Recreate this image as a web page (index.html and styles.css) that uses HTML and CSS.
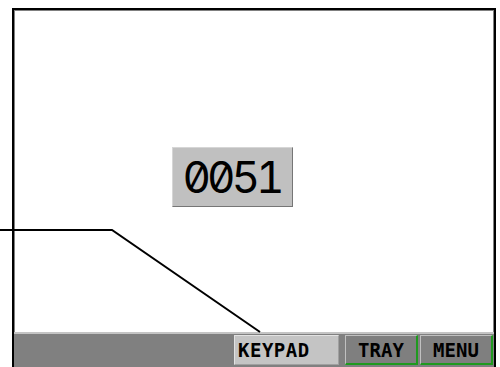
FILE: index.html
```html
<!DOCTYPE html>
<html lang="en">
<head>
  <meta charset="UTF-8">
  <meta name="viewport" content="width=device-width, initial-scale=1.0">
  <title>Counter Screen</title>
  <link rel="stylesheet" href="styles.css">
</head>
<body>

  <div class="screen">
    <div class="canvas">
      <div class="counter">0051</div>
    </div>

    <div class="status-bar">
      <button class="btn btn-keypad">KEYPAD</button>
      <button class="btn btn-tray">TRAY</button>
      <button class="btn btn-menu">MENU</button>
    </div>
  </div>

  <svg class="callout" width="500" height="367" viewBox="0 0 500 367">
    <polyline points="0,230 112,230 260,332" fill="none" stroke="#000" stroke-width="2" />
  </svg>

</body>
</html>
```

FILE: styles.css
```css
body {
  margin: 0;
  padding: 0;
  width: 500px;
  height: 367px;
  overflow: hidden;
  background: #fff;
  position: relative;
  font-family: "DejaVu Sans Mono", monospace;
}
.screen {
  box-sizing: border-box;
  width: 484px;
  height: 367px;
  margin: 8px 0 0 12px;
  border: 2px solid #000;
  border-bottom: 0;
  display: flex;
  flex-direction: column;
  background: #fff;
  box-shadow: inset 1px 1px 0 #808080, inset -1px 0 0 #808080;
}
.canvas {
  height: 322px;
  box-sizing: border-box;
  padding: 137px 0 0 158px;
}
.counter {
  box-sizing: border-box;
  width: 121px;
  height: 60px;
  background: #c0c0c0;
  border-top: 1px solid #d6d6d6;
  border-left: 1px solid #d6d6d6;
  border-right: 1px solid #767676;
  border-bottom: 1px solid #767676;
  display: flex;
  align-items: center;
  justify-content: center;
  padding-right: 2px;
  font-family: Inter, "DejaVu Sans", sans-serif;
  font-feature-settings: "zero" 1, "tnum" 1;
  font-size: 44px;
  letter-spacing: -4px;
  color: #000;
}
.status-bar {
  box-sizing: border-box;
  height: 35px;
  background: #808080;
  border-top: 2px solid #c4c4c4;
  padding: 1px 1px 0 0;
  display: flex;
  justify-content: flex-end;
  align-items: flex-start;
}
.btn {
  box-sizing: border-box;
  height: 30px;
  margin: 0;
  padding: 0;
  font-family: "DejaVu Sans Mono", monospace;
  font-weight: bold;
  font-size: 19px;
  color: #000;
  cursor: pointer;
}
.btn-keypad {
  width: 105px;
  margin-right: 6px;
  padding-left: 3px;
  text-align: left;
  letter-spacing: 0.5px;
  background: #c4c4c4;
  border: 1px solid #e2e2e2;
  border-right-color: #a0a0a0;
  border-bottom-color: #a0a0a0;
}
.btn-tray, .btn-menu {
  width: 73px;
  background: #7f7f7f;
  border: 1px solid #c0c0c0;
  border-right: 2px solid #1f9a1f;
  border-bottom: 2px solid #1f9a1f;
}
.btn-tray {
  margin-right: 2px;
}
.callout {
  position: absolute;
  left: 0;
  top: 0;
  pointer-events: none;
}
```
